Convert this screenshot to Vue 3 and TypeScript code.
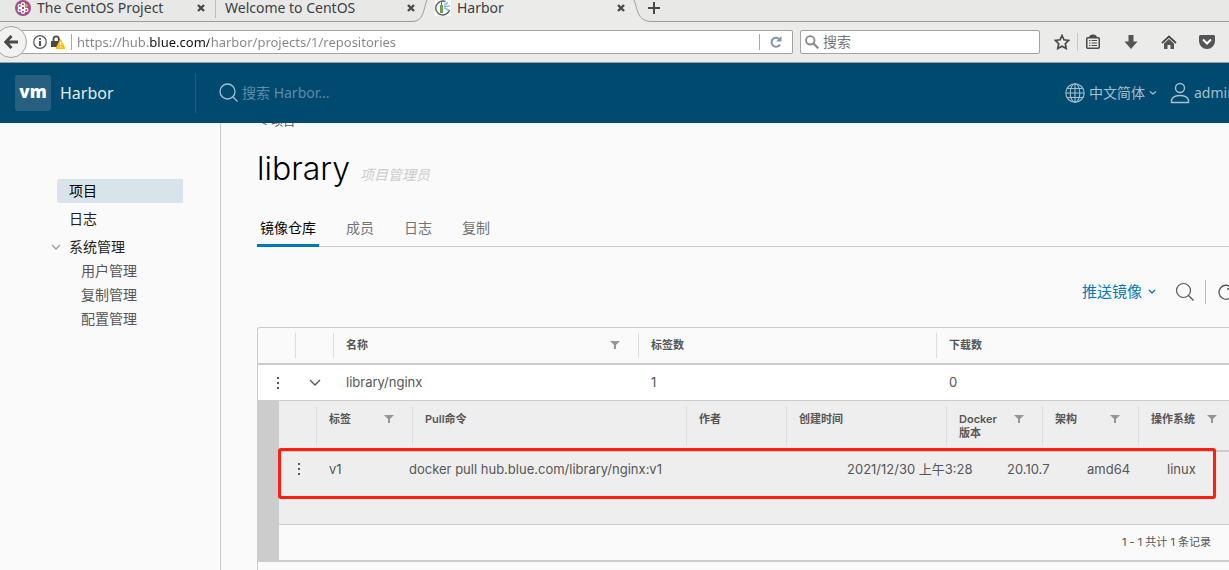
<script setup lang="ts">
import { ref } from 'vue'

interface Column {
  label: string
  filter?: boolean
}

const address = ref('https://hub.blue.com/harbor/projects/1/repositories')
const webQuery = ref('')
const harborQuery = ref('')

const adminLinks: string[] = ['用户管理', '复制管理', '配置管理']
const projectTabs: string[] = ['镜像仓库', '成员', '日志', '复制']
const activeTab = ref('镜像仓库')

const repoColumns: Column[] = [
  { label: '' },
  { label: '' },
  { label: '名称', filter: true },
  { label: '标签数' },
  { label: '下载数' },
]

const tagColumns: Column[] = [
  { label: '' },
  { label: '标签', filter: true },
  { label: 'Pull命令' },
  { label: '作者' },
  { label: '创建时间' },
  { label: 'Docker\n版本', filter: true },
  { label: '架构', filter: true },
  { label: '操作系统', filter: true },
]

const tag: string[] = [
  'v1',
  'docker pull hub.blue.com/library/nginx:v1',
  '2021/12/30 上午3:28',
  '20.10.7',
  'amd64',
  'linux',
]
</script>

<template>
  <div class="window">
    <div class="browser">
      <div class="tab-strip">
        <div class="tab first">
          <svg class="favicon" viewBox="0 0 16 16" aria-hidden="true">
            <circle cx="8" cy="8" r="8" fill="#a14f8c" />
            <g fill="none" stroke="#fff" stroke-width="1.2">
              <circle cx="8" cy="8" r="1.8" />
              <circle cx="8" cy="4.2" r="1.6" />
              <circle cx="8" cy="11.8" r="1.6" />
              <circle cx="4.7" cy="6.1" r="1.6" />
              <circle cx="11.3" cy="9.9" r="1.6" />
              <circle cx="4.7" cy="9.9" r="1.6" />
            </g>
            <circle cx="11.2" cy="5.6" r="1.6" fill="#efa724" />
          </svg>
          <span class="tab-title">The CentOS Project</span>
          <button class="icon-button" aria-label="Close The CentOS Project">
            <svg width="8" height="8" viewBox="0 0 8 8"><path d="M1 1l6 6M7 1L1 7" stroke="#4a4a4a" stroke-width="2.4" /></svg>
          </button>
        </div>
        <div class="tab second">
          <span class="tab-title">Welcome to CentOS</span>
          <button class="icon-button" aria-label="Close Welcome to CentOS">
            <svg width="8" height="8" viewBox="0 0 8 8"><path d="M1 1l6 6M7 1L1 7" stroke="#4a4a4a" stroke-width="2.4" /></svg>
          </button>
        </div>
        <div class="tab current">
          <svg class="tab-shape" width="240" height="22" viewBox="0 0 240 22" aria-hidden="true">
            <path d="M0 22V21.5C12 21.5 11 10 15 0H222C226 10 225 21.5 240 21.5V22Z" fill="#ebebea" />
            <path d="M0 21.5C12 21.5 11 10 15 0M222 0C226 10 225 21.5 240 21.5" fill="none" stroke="#9a9fa5" />
          </svg>
          <svg class="favicon" viewBox="0 0 16 16" aria-hidden="true">
            <path d="M0 0h16v16H0z" fill="#fff" />
            <path d="M10.500 1.500A7 7 0 1 0 14.500 10" fill="none" stroke="#555f5c" stroke-width="1.4" />
            <path d="M5 5h3v8H5z" fill="#68a34a" />
            <path d="M6 2.500h1v2H6z" fill="#334" />
            <path d="M9 5l4-2.500M9 6.500l6-.5M9 7.500l5 3" stroke="#8cbbe4" stroke-width="1.600" />
          </svg>
          <span class="tab-title">Harbor</span>
          <button class="icon-button" aria-label="Close Harbor">
            <svg width="8" height="8" viewBox="0 0 8 8"><path d="M1 1l6 6M7 1L1 7" stroke="#4a4a4a" stroke-width="2.4" /></svg>
          </button>
        </div>
        <button class="icon-button new-tab" aria-label="New tab">
          <svg width="12" height="12" viewBox="0 0 12 12"><path d="M6 0v12M0 6h12" stroke="#4a4a4a" stroke-width="2" /></svg>
        </button>
      </div>

      <div class="toolbar">
        <div class="address-bar">
          <button class="back" aria-label="Back">
            <svg width="14" height="14" viewBox="0 0 14 14"><path d="M7.5 1L1.8 7l5.7 6M2 7h12" fill="none" stroke="#4a4a4a" stroke-width="3" /></svg>
          </button>
          <svg width="14" height="14" viewBox="0 0 14 14" aria-hidden="true">
            <circle cx="7" cy="7" r="6.3" fill="none" stroke="#555" stroke-width="1.2" />
            <path d="M7 6v5M7 3v1.8" stroke="#444" stroke-width="1.8" />
          </svg>
          <svg class="lock" width="14" height="14" viewBox="0 0 14 14" aria-hidden="true">
            <path d="M2.5 6V4a2.700 2.700 0 0 1 5.400 0v2" fill="none" stroke="#4a4a4a" stroke-width="1.8" />
            <path d="M0 6h9v6H0z" fill="#4a4a4a" />
            <path d="M9.500 4.500L14 13.500H5z" fill="#ffbf00" stroke="#ffbf00" stroke-linejoin="round" />
            <path d="M9.500 7v3M9.500 11v1.500" stroke="#fff" stroke-width="1.3" />
          </svg>
          <input v-model="address" class="address" type="text" aria-label="Address" />
          <button class="reload" aria-label="Reload">
            <svg width="12" height="12" viewBox="0 0 12 12"><path d="M10 8.500A4.500 4.500 0 1 1 9.200 3" fill="none" stroke="#8494a3" stroke-width="2" /><path d="M11.500 0v5.500H6z" fill="#8494a3" /></svg>
          </button>
        </div>
        <label class="web-search">
          <svg width="14" height="14" viewBox="0 0 14 14" aria-hidden="true"><circle cx="5.3" cy="5.3" r="4.2" fill="none" stroke="#8a8a8a" stroke-width="1.9" /><path d="M8.3 8.3l5 5" stroke="#8a8a8a" stroke-width="2.2" /></svg>
          <input v-model="webQuery" type="text" placeholder="搜索" aria-label="搜索" />
        </label>
        <div class="actions">
          <button class="icon-button" aria-label="Bookmark">
            <svg width="16" height="16" viewBox="0 0 16 16"><path d="M8 1.500l2 4.300 4.700.6-3.400 3.300.9 4.800L8 12.200l-4.200 2.300.9-4.800L1.300 6.400l4.700-.6z" fill="none" stroke="#4a4a4a" stroke-width="1.7" /></svg>
          </button>
          <span class="action-rule"></span>
          <button class="icon-button" aria-label="Library">
            <svg width="16" height="16" viewBox="0 0 16 16"><rect x="1.750" y="3.750" width="12.500" height="10.500" rx="1" fill="none" stroke="#4a4a4a" stroke-width="1.500" /><path d="M4 4a4 3.500 0 0 1 8 0z" fill="#4a4a4a" /><path d="M4 6.500h1.500M4 9h1.500M4 11.500h1.500M6.500 6.500H12M6.500 9H12M6.500 11.500H12" stroke="#4a4a4a" stroke-width="1" /></svg>
          </button>
          <button class="icon-button spaced" aria-label="Downloads">
            <svg width="16" height="16" viewBox="0 0 16 16"><path d="M5.500 1h5v6.500h4L8 15 1.500 7.500h4z" fill="#555" /></svg>
          </button>
          <button class="icon-button spaced" aria-label="Home">
            <svg width="16" height="16" viewBox="0 0 16 16"><path d="M1 9l7-6.500L15 9" fill="none" stroke="#4a4a4a" stroke-width="1.800" /><path d="M8 5l5 4.500V15H9.500v-4h-3v4H3V9.500z" fill="#555" /></svg>
          </button>
          <button class="icon-button spaced" aria-label="Pocket">
            <svg width="16" height="16" viewBox="0 0 16 16"><path d="M1.500 1h13A1.500 1.500 0 0 1 16 2.500V7A8 8 0 0 1 0 7V2.500A1.500 1.500 0 0 1 1.500 1z" fill="#555" /><path d="M4 5.500l4 4 4-4" fill="none" stroke="#fff" stroke-width="2" /></svg>
          </button>
        </div>
      </div>
    </div>

    <header class="app-header">
      <a class="brand" href="#"><span class="logo">vm</span><span class="product">Harbor</span></a>
      <label class="app-search">
        <svg width="20" height="20" viewBox="0 0 20 20" aria-hidden="true"><circle cx="8.500" cy="8.500" r="7.500" fill="none" stroke="#a6bfcd" stroke-width="1.300" /><path d="M13.500 13.500l5 5" stroke="#a6bfcd" stroke-width="1.300" /></svg>
        <input v-model="harborQuery" type="text" placeholder="搜索 Harbor..." aria-label="搜索 Harbor" />
      </label>
      <button class="menu language">
        <svg width="20" height="20" viewBox="0 0 20 20" aria-hidden="true"><g fill="none" stroke="#a6bfcd" stroke-width="1.100"><circle cx="10" cy="10" r="9.200" /><ellipse cx="10" cy="10" rx="4.800" ry="9.200" /><path d="M10 1v18M1 10h18M2.500 5.500h15M2.500 14.500h15" /></g></svg>
        <span>中文简体</span>
        <svg class="caret" width="8" height="6" viewBox="0 0 8 6" aria-hidden="true"><path d="M1 1.500l3 2.500 3-2.500" fill="none" stroke="#a6bfcd" stroke-width="1.200" /></svg>
      </button>
      <button class="menu user">
        <svg width="20" height="22" viewBox="0 0 20 22" aria-hidden="true"><g fill="none" stroke="#a6bfcd" stroke-width="1.400"><circle cx="10" cy="6" r="4.500" /><path d="M1.500 20.500V18c2-6 15-6 17 0v2.500z" /></g></svg>
        <span class="user-name">admin</span>
      </button>
    </header>

    <div class="body">
      <nav class="side">
        <a class="side-link selected" href="#">项目</a>
        <a class="side-link" href="#">日志</a>
        <div class="side-group">
          <button class="side-link group-head" aria-expanded="true">
            <svg width="10" height="6" viewBox="0 0 10 6" aria-hidden="true"><path d="M1 1l4 4 4-4" fill="none" stroke="#9a9a9a" stroke-width="1.300" /></svg>
            系统管理
          </button>
          <a v-for="item in adminLinks" :key="item" class="side-sub" href="#">{{ item }}</a>
        </div>
      </nav>

      <main class="content">
        <a class="crumb" href="#">&lt; 项目</a>
        <div class="heading">
          <h1>library</h1>
          <em>项目管理员</em>
        </div>
        <div class="project-tabs" role="tablist">
          <button
            v-for="name in projectTabs"
            :key="name"
            role="tab"
            :aria-selected="name === activeTab"
            :class="{ active: name === activeTab }"
            @click="activeTab = name"
          >{{ name }}</button>
        </div>

        <div class="grid-actions">
          <button class="push">
            推送镜像
            <svg width="8" height="6" viewBox="0 0 8 6" aria-hidden="true"><path d="M1 1l3 3 3-3" fill="none" stroke="#0079b8" stroke-width="1.300" /></svg>
          </button>
          <button class="icon-button" aria-label="搜索">
            <svg width="20" height="20" viewBox="0 0 20 20"><circle cx="8.500" cy="8.500" r="7" fill="none" stroke="#565656" stroke-width="1.200" /><path d="M13.500 13.500l5 5" stroke="#565656" stroke-width="1.300" /></svg>
          </button>
          <span class="grid-rule"></span>
          <button class="icon-button refresh" aria-label="刷新">
            <svg width="18" height="18" viewBox="0 0 18 18"><path d="M15.500 12A7 7 0 1 1 14 4.300M10 6h5" fill="none" stroke="#565656" stroke-width="1.300" /></svg>
          </button>
        </div>

        <table class="repos">
          <thead>
            <tr>
              <th v-for="(column, i) in repoColumns" :key="i" scope="col">
                <span>{{ column.label }}</span>
                <button v-if="column.filter" class="icon-button" :aria-label="'筛选' + column.label">
                  <svg width="10" height="8" viewBox="0 0 10 8"><path d="M0 0h10L6 4v4H4V4z" fill="#959595" /></svg>
                </button>
              </th>
            </tr>
          </thead>
          <tbody>
            <tr class="repo-row">
              <td class="center">
                <button class="icon-button" aria-label="操作">
                  <svg width="4" height="14" viewBox="0 0 4 14"><path d="M1 1h2v2H1zM1 6h2v2H1zM1 11h2v2H1z" fill="#565656" /></svg>
                </button>
              </td>
              <td class="center">
                <button class="icon-button" aria-label="收起" aria-expanded="true">
                  <svg width="12" height="8" viewBox="0 0 12 8"><path d="M1 1l5 5 5-5" fill="none" stroke="#565656" stroke-width="1.300" /></svg>
                </button>
              </td>
              <td>library/nginx</td>
              <td>1</td>
              <td>0</td>
            </tr>
            <tr class="detail-row">
              <td colspan="5">
                <table class="tags">
                  <thead>
                    <tr>
                      <th v-for="(column, i) in tagColumns" :key="i" scope="col">
                        <span>{{ column.label }}</span>
                        <button v-if="column.filter" class="icon-button" :aria-label="'筛选' + column.label">
                          <svg width="10" height="8" viewBox="0 0 10 8"><path d="M0 0h10L6 4v4H4V4z" fill="#959595" /></svg>
                        </button>
                      </th>
                    </tr>
                  </thead>
                  <tbody>
                    <tr>
                      <td class="center">
                        <button class="icon-button" aria-label="操作 v1">
                          <svg width="4" height="14" viewBox="0 0 4 14"><path d="M1 1h2v2H1zM1 6h2v2H1zM1 11h2v2H1z" fill="#565656" /></svg>
                        </button>
                      </td>
                      <td v-for="value in tag" :key="value">{{ value }}</td>
                    </tr>
                  </tbody>
                </table>
                <div class="pager">1 - 1 共计 1 条记录</div>
                <div class="marker"></div>
              </td>
            </tr>
          </tbody>
        </table>
      </main>
    </div>
  </div>
</template>

<style>
body {
  margin: 0;
  overflow: hidden;
}
</style>

<style scoped>
* {
  box-sizing: border-box;
}
.window {
  display: flex;
  flex-direction: column;
  height: 100vh;
  overflow: hidden;
  background: #fafafa;
  color: #565656;
  font: 13px/18px Inter, "Noto Sans CJK SC", sans-serif;
}
button,
input {
  padding: 0;
  border: 0;
  outline: 0;
  background: none;
  color: inherit;
  font: inherit;
}
a {
  color: inherit;
  text-decoration: none;
}
svg {
  display: block;
  flex: none;
}
.icon-button {
  display: flex;
  flex: none;
}

/* browser frame */
.browser {
  flex: none;
  background: #ebebea;
  color: #3c4043;
  font: 14px/16px "Noto Sans", "Noto Sans CJK SC", sans-serif;
}
.tab-strip {
  display: flex;
  height: 22px;
  padding-left: 5px;
  border-bottom: 1px solid #9c9d9a;
  background: #e8e8e6;
}
.tab {
  display: flex;
  align-items: center;
  width: 210px;
  height: 16px;
  padding: 0 10px;
  position: relative;
}
.second::before {
  content: "";
  position: absolute;
  left: 0;
  top: 0;
  width: 1px;
  height: 18px;
  background: #bdbdbb;
}
.favicon {
  width: 16px;
  height: 16px;
  margin-right: 6px;
  position: relative;
}
.tab-title {
  flex: 1;
  position: relative;
  white-space: nowrap;
}
.tab-shape {
  position: absolute;
  left: -13px;
  top: 0;
}
.tab .icon-button {
  position: relative;
}
.new-tab {
  margin: 2px 0 0 13px;
  position: relative;
  height: 12px;
}
.toolbar {
  display: flex;
  align-items: center;
  height: 41px;
  padding-right: 14px;
  border-bottom: 1px solid #a09f9b;
}
.address-bar {
  display: flex;
  flex: 1;
  align-items: center;
  gap: 4px;
  height: 24px;
  margin-right: 7px;
  border: 1px solid #a3a3a0;
  border-left: 0;
  border-radius: 2px;
  background: linear-gradient(to right, #ebebea 12px, #fff 12px);
}
.back {
  display: flex;
  flex: none;
  align-items: center;
  justify-content: flex-end;
  width: 32px;
  height: 32px;
  margin-left: -5px;
  padding-right: 8px;
  border: 1px solid #a3a3a0;
  border-radius: 50%;
  background: #f2f2f1;
}
.address-bar > svg:first-of-type {
  margin-left: 2px;
}
.address {
  flex: 1;
  min-width: 0;
  height: 16px;
  margin-left: 2px;
  padding-left: 5px;
  border-left: 1px solid #aaa;
  background: linear-gradient(to right, #858585 76px, #111 76px 137px, #858585 137px);
  background-clip: text;
  -webkit-text-fill-color: transparent;
  font-size: 13px;
}
.reload {
  display: flex;
  align-items: center;
  justify-content: center;
  width: 33px;
  height: 16px;
  border-left: 1px solid #aaa;
}
.web-search {
  display: flex;
  align-items: center;
  gap: 4px;
  width: 240px;
  height: 24px;
  padding: 0 4px;
  border: 1px solid #a3a3a0;
  border-radius: 2px;
  background: #fff;
}
.web-search input {
  width: 100%;
  min-width: 0;
}
.web-search input::placeholder {
  color: #777;
}
.actions {
  display: flex;
  align-items: center;
  margin-left: 14px;
}
.action-rule {
  width: 1px;
  height: 18px;
  margin: 0 7px;
  background: #c8c8c6;
}
.spaced {
  margin-left: 22px;
}

/* application header */
.app-header {
  display: flex;
  flex: none;
  align-items: center;
  height: 60px;
  background: #004a70;
  color: #a6bfcd;
  font-family: "Noto Sans", "Noto Sans CJK SC", sans-serif;
  font-size: 14px;
}
.brand {
  display: flex;
  align-items: center;
  gap: 9px;
  width: 196px;
  height: 40px;
  padding-left: 15px;
  border-right: 1px solid #1f5f81;
}
.logo {
  width: 36px;
  height: 36px;
  border-radius: 3px;
  background: #265f80;
  color: #fff;
  font: 800 17px/33px "Open Sans", sans-serif;
  text-align: center;
}
.product {
  color: #e4ecf0;
  font-size: 16px;
}
.app-search {
  display: flex;
  flex: 1;
  align-items: center;
  gap: 3px;
  padding-left: 23px;
}
.app-search input {
  flex: 1;
  min-width: 0;
}
.app-search input::placeholder {
  color: #5f8ba5;
}
.menu {
  display: flex;
  flex: none;
  align-items: center;
  gap: 4px;
}
.user {
  margin-left: 13px;
}
.user-name {
  width: 35px;
  overflow: hidden;
}

/* page body */
.body {
  display: flex;
  flex: 1;
  min-height: 0;
}
.side {
  flex: none;
  width: 221px;
  padding: 56px 37px 0 57px;
  border-right: 1px solid #ccc;
  font-size: 14px;
}
.side-link,
.side-sub {
  display: flex;
  align-items: center;
  height: 24px;
}
.side-link {
  margin-bottom: 4px;
  padding-left: 12px;
  color: #222;
}
.selected {
  border-radius: 3px 0 0 3px;
  background: #d9e4ea;
  color: #000;
}
.group-head {
  gap: 8px;
  margin: 0 0 0 -6px;
  padding: 0;
}
.side-sub {
  padding-left: 24px;
}
.content {
  display: flex;
  flex: 1;
  flex-direction: column;
  min-width: 0;
  padding-left: 36px;
  overflow: hidden;
}
.crumb {
  margin: -10px 0 0 3px;
  font-size: 12px;
}
.heading {
  display: flex;
  align-items: baseline;
  gap: 10px;
  margin-top: 18px;
}
h1 {
  margin: 0;
  color: #000;
  font-size: 32px;
  font-weight: 300;
  line-height: 40px;
}
em {
  color: #ccc;
  font-size: 14px;
}
.project-tabs {
  display: flex;
  flex: none;
  gap: 24px;
  height: 36px;
  margin-top: 22px;
  border-bottom: 1px solid #ccc;
  font-size: 14px;
}
.project-tabs button {
  height: 36px;
  padding: 0 3px;
  border-bottom: 3px solid transparent;
  color: #737373;
}
.project-tabs .active {
  border-color: #0079b8;
  color: #000;
}
.grid-actions {
  display: flex;
  flex: none;
  align-items: center;
  justify-content: flex-end;
  height: 24px;
  margin: 33px 0 23px;
}
.push {
  display: flex;
  align-items: center;
  gap: 6px;
  margin-right: 19px;
  color: #0079b8;
  font-size: 15px;
}
.grid-rule {
  width: 1px;
  height: 24px;
  margin: 0 11px 0 10px;
  background: #bbb;
}
.refresh {
  width: 12px;
  overflow: hidden;
}

/* data grids */
table {
  display: block;
}
thead,
tbody {
  display: block;
}
tr {
  display: grid;
}
th,
td {
  min-width: 0;
  padding: 0 0 0 12px;
  text-align: left;
}
th {
  display: flex;
  justify-content: space-between;
  margin: 5px 0;
  padding-right: 18px;
  border-right: 1px solid #ddd;
  font-size: 11px;
  font-weight: 600;
  line-height: 14px;
  white-space: pre-line;
}
th:last-child {
  justify-content: flex-start;
  gap: 12px;
  padding-right: 0;
  border-right: 0;
}
th .icon-button {
  margin-top: 3px;
}
th:first-child {
  padding: 0;
}
.center {
  display: flex;
  align-items: center;
  justify-content: center;
  padding: 0;
}
.repos {
  flex: 1;
  border: 1px solid #ccc;
  border-width: 1px 0 0 1px;
  border-radius: 3px 0 0 0;
}
.repos > thead > tr,
.repo-row {
  grid-template-columns: 38px 38px 305px 298px 1fr;
}
.repos > thead > tr {
  height: 37px;
  border-bottom: 2px solid #ccc;
}
.repos > thead th {
  padding-top: 5px;
}
.repo-row {
  height: 36px;
  border-bottom: 1px solid #ccc;
  background: #fff;
  line-height: 35px;
}
.repo-row .center:first-child {
  padding-left: 2px;
}
.detail-row td[colspan] {
  position: relative;
  padding: 0;
  border-left: 21px solid #ccc;
  border-bottom: 2px solid #ccc;
}
.tags {
  border-bottom: 1px solid #ccc;
  background: #eee;
}
.tags thead tr {
  grid-template-columns: 38px 96px 274px 100px 160px 96px 96px 1fr;
  height: 51px;
  border-bottom: 2px solid #ccc;
}
.tags th {
  padding-top: 6px;
}
.tags tbody tr {
  grid-template-columns: 38px 80px 438px 160px 80px 80px 1fr;
  height: 72px;
  align-items: start;
  line-height: 34px;
}
.tags .center {
  height: 34px;
  padding-left: 2px;
}
.pager {
  height: 35px;
  padding-right: 18px;
  font-size: 11px;
  line-height: 35px;
  text-align: right;
}
.marker {
  position: absolute;
  top: 47px;
  right: 13px;
  left: -1px;
  height: 51px;
  border: 3px solid #ff1e10;
  border-radius: 3px;
  pointer-events: none;
}
</style>
